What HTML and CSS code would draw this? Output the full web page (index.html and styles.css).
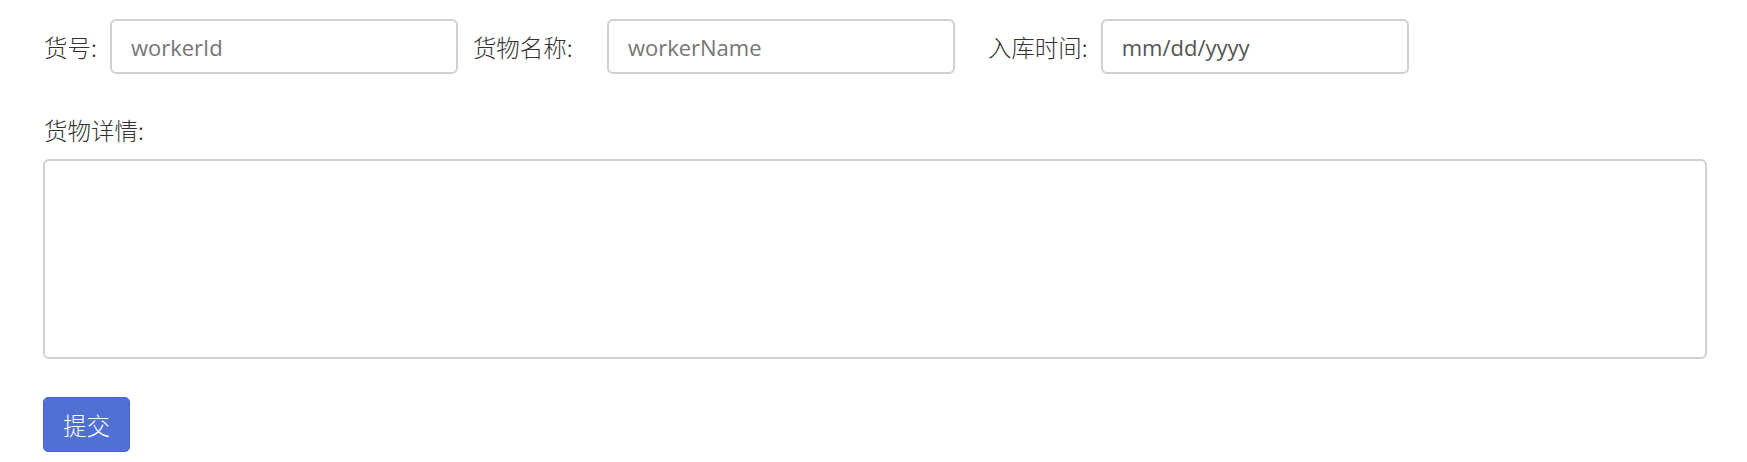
FILE: index.html
```html
<!DOCTYPE html>
<html lang="zh">
<head>
<meta charset="utf-8">
<title>货物录入</title>
<link rel="stylesheet" href="styles.css">
</head>
<body>
<form class="form">
  <div class="row">
    <label class="lbl lbl-id">货号:</label>
    <input class="field field-id" type="text" placeholder="workerId">
    <label class="lbl lbl-name">货物名称:</label>
    <input class="field field-name" type="text" placeholder="workerName">
    <label class="lbl lbl-date">入库时间:</label>
    <input class="field field-date" type="text" value="mm/dd/yyyy">
  </div>
  <label class="lbl lbl-detail">货物详情:</label>
  <textarea class="detail"></textarea>
  <button class="btn" type="button">提交</button>
</form>
</body>
</html>
```
FILE: styles.css
```css
html, body {
  margin: 0;
  padding: 0;
  background: #ffffff;
}
body {
  font-family: "Open Sans", "Noto Sans", "Noto Sans CJK SC", sans-serif;
  font-size: 22px;
  color: #333333;
}
.form {
  padding: 19px 40px 0 43px;
  display: flex;
  flex-direction: column;
  align-items: flex-start;
}
.row {
  display: flex;
  align-items: center;
  height: 55px;
}
.lbl {
  font-family: "Noto Sans CJK SC", sans-serif;
  font-size: 23.5px;
  line-height: 32px;
  color: #333333;
  font-weight: 300;
}
.lbl-id { margin-left: 1px; margin-right: 13px; }
.lbl-name { margin-left: 15px; width: 134px; }
.lbl-date { margin-left: 33px; margin-right: 13px; }
.field {
  box-sizing: border-box;
  height: 55px;
  border: 2px solid #d0d0d0;
  border-radius: 6px;
  padding: 0 19px;
  font-family: "Open Sans", "Noto Sans", sans-serif;
  font-size: 22px;
  color: #555555;
  background: #ffffff;
  outline: none;
}
.field::placeholder { color: #757575; }
.field-id, .field-name { width: 348px; }
.field-date { width: 308px; }
.lbl-detail {
  margin-top: 40px;
  margin-left: 1px;
}
.detail {
  box-sizing: border-box;
  margin-top: 13px;
  width: 1664px;
  height: 200px;
  border: 2px solid #d0d0d0;
  border-radius: 6px;
  resize: none;
  outline: none;
  background: #ffffff;
}
.btn {
  margin-top: 38px;
  box-sizing: border-box;
  width: 87px;
  height: 55px;
  border: 1px solid #4466cc;
  border-radius: 5px;
  background: #5070d6;
  color: #ffffff;
  font-family: "Noto Sans CJK SC", sans-serif;
  font-weight: 300;
  font-size: 23.5px;
  padding: 0;
}
```
